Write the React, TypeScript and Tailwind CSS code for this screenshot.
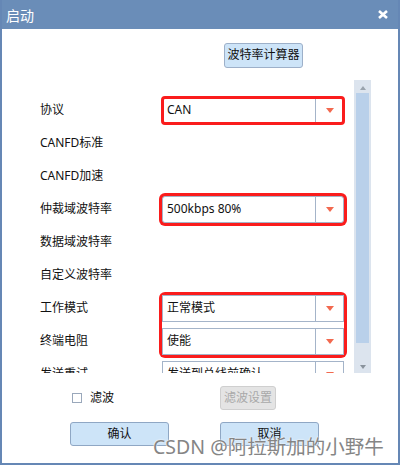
function Arrow() {
  return (
    <svg width="8" height="5" viewBox="0 0 8 5">
      <path d="M0 0 L8 0 L4 5 Z" fill="#f2694f" />
    </svg>
  )
}

function Select({ value, ring = '' }: { value: string; ring?: string }) {
  return (
    <div className={`flex h-[27px] w-[182px] items-center border border-[#a4b4c9] bg-white ${ring}`}>
      <span className="flex-1 truncate pl-[4px] text-[12px] text-[#111]">{value}</span>
      <div className="flex h-full w-[28px] items-center justify-center border-l border-[#a4b4c9]">
        <Arrow />
      </div>
    </div>
  )
}

function Label({ text }: { text: string }) {
  return <div className="flex h-[33px] items-center text-[12px] text-[#111]">{text}</div>
}

function App() {
  return (
    <div className="relative flex h-[465px] w-[400px] flex-col overflow-hidden border-x-2 border-b-2 border-[#6587b5] bg-white font-['Noto_Sans','Noto_Sans_CJK_SC',sans-serif]">
      <div className="-mx-[2px] flex h-[29px] shrink-0 items-center justify-between bg-[#6a8db8] pl-[6px] pr-[12px] text-white">
        <span className="pt-[2px] text-[14px]">启动</span>
        <svg width="10" height="9" viewBox="0 0 10 9">
          <path d="M1 1 L9 8 M9 1 L1 8" stroke="white" strokeWidth="2.6" />
        </svg>
      </div>

      <div className="mt-[12px] pl-[222px]">
        <button className="h-[25px] w-[79px] rounded-[3px] border border-[#9db0c9] bg-[#cde4f8] text-[12px] text-[#111]">
          波特率计算器
        </button>
      </div>

      <div className="mt-[12px] flex h-[293px] shrink-0">
        <div className="h-full w-[352px] overflow-hidden pl-[38px] pt-[14px]">
          <div className="grid grid-cols-[122px_182px] grid-rows-[repeat(9,33px)]">
            <Label text="协议" />
            <div className="flex items-center">
              <Select value="CAN" ring="outline-[3px] outline-offset-[-2px] outline-[#fa1c1c] rounded-[3px]" />
            </div>
            <Label text="CANFD标准" />
            <div />
            <Label text="CANFD加速" />
            <div />
            <Label text="仲裁域波特率" />
            <div className="flex items-center">
              <Select value="500kbps 80%" ring="ring-[3px] ring-[#fa1c1c] rounded-[3px]" />
            </div>
            <Label text="数据域波特率" />
            <div />
            <Label text="自定义波特率" />
            <div />
            <Label text="工作模式" />
            <div className="col-start-2 row-span-2 my-[3px] flex flex-col gap-[6px] rounded-[3px] ring-[3px] ring-[#fa1c1c]">
              <Select value="正常模式" />
              <Select value="使能" />
            </div>
            <div className="col-start-1 row-start-8">
              <Label text="终端电阻" />
            </div>
            <Label text="发送重试" />
            <div className="flex items-center">
              <Select value="发送到总线前确认" />
            </div>
          </div>
        </div>
        <div className="flex h-full w-[17px] flex-col items-center bg-[#dce4ee]">
          <svg className="mt-[6px]" width="6" height="4" viewBox="0 0 6 4">
            <path d="M0 4 L6 4 L3 0 Z" fill="#9aa3ad" />
          </svg>
          <div className="mt-[3px] h-[250px] w-[13px] bg-[#b9d0ea]" />
          <div className="flex-1" />
          <svg className="mb-[4px]" width="6" height="4" viewBox="0 0 6 4">
            <path d="M0 0 L6 0 L3 4 Z" fill="#8a939d" />
          </svg>
        </div>
      </div>

      <div className="mt-[13px] flex h-[24px] items-center">
        <div className="flex w-[218px] items-center pl-[70px]">
          <div className="h-[10px] w-[10px] border border-[#9aa8bb] bg-white" />
          <span className="ml-[8px] text-[12px] text-[#111]">滤波</span>
        </div>
        <button className="h-[24px] w-[56px] rounded-[3px] border border-[#cfcfcf] bg-[#e4e4e4] text-[12px] text-[#a9a9a9]">
          滤波设置
        </button>
      </div>

      <div className="mt-[12px] flex gap-[51px] pl-[68px]">
        <button className="h-[24px] w-[99px] rounded-[3px] border border-[#8fa7c4] bg-[#cde4f8] text-[12px] text-[#111]">
          确认
        </button>
        <button className="h-[24px] w-[99px] rounded-[3px] border border-[#8fa7c4] bg-[#cde4f8] text-[12px] text-[#111]">
          取消
        </button>
      </div>

      <div className="pointer-events-none absolute left-[151px] top-[432px] whitespace-nowrap text-[19.5px] text-[#858585] [text-shadow:0_0_2px_#ffffff,0_0_1px_#ffffff]">
        CSDN @阿拉斯加的小野牛
      </div>
    </div>
  )
}

export default App
